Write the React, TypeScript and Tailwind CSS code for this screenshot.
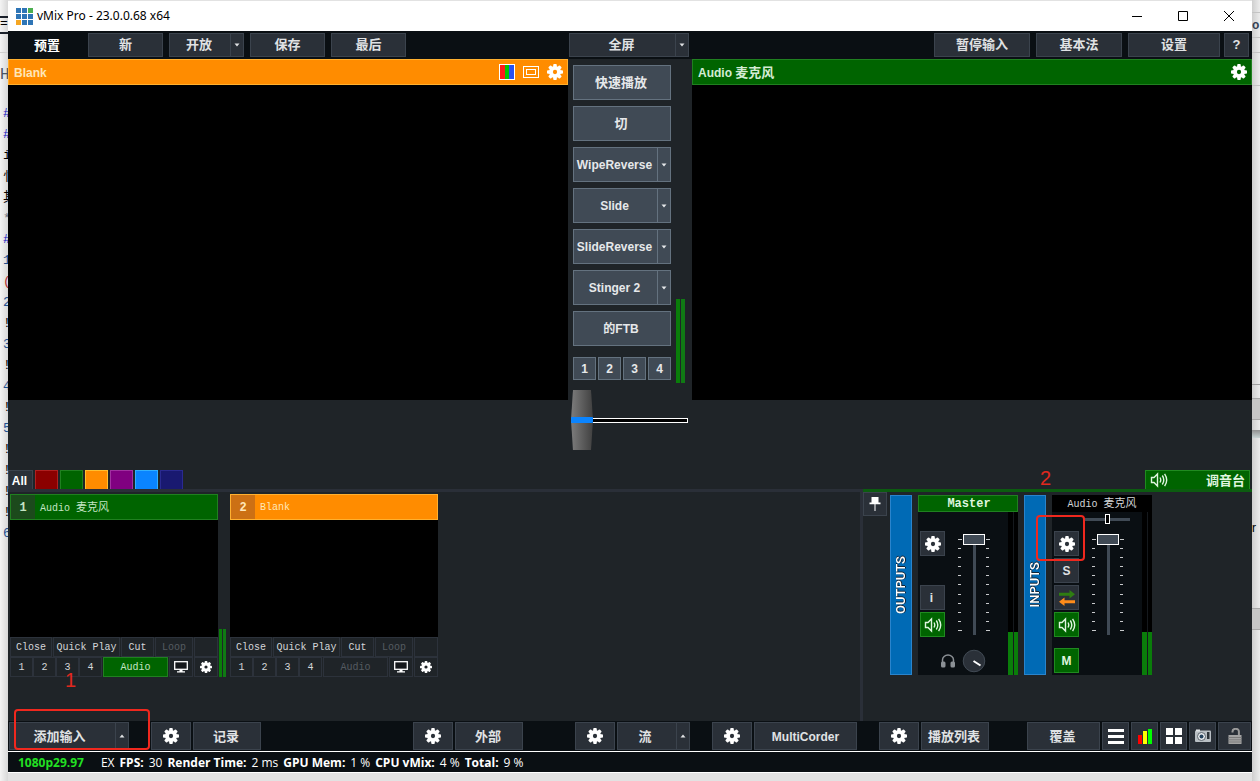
import { type ReactNode } from 'react';
import clsx from 'clsx';

const tabColors = [
    'bg-[#8b0000] border-[#b02020]',
    'bg-[#006400] border-[#208020]',
    'bg-[#ff8c00] border-[#ffc030]',
    'bg-[#800080] border-[#a030a0]',
    'bg-[#0a84ff] border-[#30b0ff]',
    'bg-[#191970] border-[#2a2a90]',
];

const transitions = ['WipeReverse', 'Slide', 'SlideReverse', 'Stinger 2'];

const editorLines = [
    ['#', 'text-[#1010c0]'],
    ['#', 'text-[#1010c0]'],
    ['i', 'text-black'],
    ['忄', 'text-black'],
    ['其', 'text-black'],
    ['*', 'text-gray-500'],
    ['#', 'text-[#1010c0]'],
    ['1', 'text-[#1d4f8f]'],
    ['(', 'text-[#b03030]'],
    ['2', 'text-[#1d4f8f]'],
    ['!', 'text-black'],
    ['3', 'text-[#1d4f8f]'],
    ['!', 'text-black'],
    ['4', 'text-[#1d4f8f]'],
    ['!', 'text-black'],
    ['5', 'text-[#1d4f8f]'],
    ['!', 'text-black'],
    ['!', 'text-black'],
    ['!', 'text-black'],
    ['!', 'text-black'],
    ['6', 'text-[#1d4f8f]'],
];

/* ── Icons ─────────────────────────────────────────────────────────── */

function Gear({ className = 'size-4' }: { className?: string }) {
    return (
        <svg viewBox="0 0 24 24" className={className} fill="currentColor" aria-hidden="true">
            <g mask="url(#gear-hole)">
                {[0, 45, 90, 135].map((deg) => (
                    <rect key={deg} x="9.3" y="0" width="5.4" height="24" rx="1.4" transform={`rotate(${deg} 12 12)`} />
                ))}
                <circle cx="12" cy="12" r="9" />
            </g>
        </svg>
    );
}

function Speaker() {
    return (
        <svg viewBox="0 0 18 16" className="h-4 w-4.5" fill="none" stroke="currentColor" strokeWidth="1.4" aria-hidden="true">
            <path d="M1.5 5.5h2.5l3.5-3.5v12l-3.5-3.5h-2.5z" />
            <path d="M10 5.5q1.5 2.5 0 5M12.3 3.5q3 4.5 0 9M14.6 1.8q4.2 6.2 0 12.4" />
        </svg>
    );
}

function Monitor() {
    return (
        <svg viewBox="0 0 14 12" className="h-3 w-3.5" aria-hidden="true">
            <rect x="0.7" y="0.7" width="12.6" height="7.6" fill="#15181b" stroke="#fff" strokeWidth="1.3" />
            <path d="M5.5 8.5h3v1.7h2.500v1.300h-8v-1.300h2.500z" fill="#fff" />
        </svg>
    );
}

function Pin() {
    return (
        <svg viewBox="0 0 12 14" className="h-3.5 w-3" fill="#fff" aria-hidden="true">
            <path d="M2.5 0h7v5.5h2v1.700h-5v6.800h-1v-6.800h-5v-1.700h2z" />
        </svg>
    );
}

function Swap() {
    return (
        <svg viewBox="0 0 16 16" className="size-4" aria-hidden="true">
            <path d="M0 2.800h10.500v-2.800l5.500 4.300-5.500 4.200v-2.800h-10.500z" fill="#2f7d12" />
            <path d="M16 10.300h-10.500v-2.800l-5.500 4.300 5.500 4.200v-2.800h10.500z" fill="#ff8c1a" />
        </svg>
    );
}

function Headphones() {
    return (
        <svg viewBox="0 0 16 14" className="h-3.5 w-4" fill="#8b9095" aria-hidden="true">
            <path d="M2.500 9v-3a5.500 5 0 0 1 11 0v3" fill="none" stroke="#8b9095" strokeWidth="1.500" />
            <rect x="1" y="7.500" width="4.500" height="6" rx="1.500" />
            <rect x="10.500" y="7.500" width="4.500" height="6" rx="1.500" />
        </svg>
    );
}

function Knob() {
    return (
        <svg viewBox="0 0 24 24" className="size-6" aria-hidden="true">
            <circle cx="12" cy="12" r="10.800" fill="#2a3038" stroke="#414a54" />
            <path d="m11.500 12 7 4.500" stroke="#fff" strokeWidth="2" />
        </svg>
    );
}

function Camera() {
    return (
        <svg viewBox="0 0 16 14" className="h-3.5 w-4" aria-hidden="true">
            <rect x="0" y="1.500" width="16" height="11.500" rx="1" fill="#b9bfc4" />
            <rect x="1" y="0.500" width="4" height="2" fill="#dfe3e6" />
            <circle cx="6.500" cy="7.500" r="4" fill="#e8ebee" stroke="#5c666e" />
            <circle cx="6.500" cy="7.500" r="2" fill="#24415c" />
            <rect x="12" y="3" width="2.500" height="7" fill="#2c3339" />
        </svg>
    );
}

function Unlock() {
    return (
        <svg viewBox="0 0 14 16" className="h-4 w-3.5" aria-hidden="true">
            <path d="M4.500 4.500v-1a3.200 2.700 0 0 1 6.400 0v4" fill="none" stroke="#9a9a9a" strokeWidth="2" />
            <rect x="0.500" y="7" width="13" height="9" fill="#a3a3a3" />
            <path d="M0.500 9.500h13M0.500 11.800h13M0.500 14h13" stroke="#7c7c7c" />
        </svg>
    );
}

function Caret({ up = false }: { up?: boolean }) {
    return (
        <svg viewBox="0 0 6 4" className={clsx('h-1 w-1.5', up && 'rotate-180')} fill="currentColor" aria-hidden="true">
            <path d="M0.500 0.500h5l-2.500 3z" />
        </svg>
    );
}

/* ── Controls ──────────────────────────────────────────────────────── */

const dark = 'border border-[#3b434d] bg-[#2a3038] text-[#e0e2e4]';
const light = 'border border-[#64727f] bg-[#404a55] text-[#e6e8ea]';
const thin = 'border border-[#2c323b] pt-0.5 text-[#d4d6d8]';
const thinOff = 'border border-[#2c323b] pt-0.5 text-[#555b61]';
const thinLive = 'border border-[#208020] bg-[#006400] pt-0.5 text-[#c4e4c4]';
const thinIcon = 'border border-[#2c323b] text-white';
const green = 'border border-[#208a20] bg-[#006400] text-[#dff5df]';

function Btn({ className, tone = dark, label, children }: { className?: string; tone?: string; label?: string; children?: ReactNode }) {
    return (
        <button type="button" aria-label={label} className={clsx('flex shrink-0 items-center justify-center whitespace-nowrap', tone, className)}>
            {children}
        </button>
    );
}

function SplitBtn({ className, tone = dark, up, children }: { className?: string; tone?: string; up?: boolean; children: ReactNode }) {
    return (
        <div className={clsx('flex shrink-0', className)}>
            <Btn tone={tone} className="min-w-0 flex-1 border-r-0 pr-0.5">{children}</Btn>
            <Btn tone={tone} className="w-3.5" label="More"><Caret up={up} /></Btn>
        </div>
    );
}

function Meter({ className }: { className?: string }) {
    return (
        <div className={clsx('flex gap-px', className)}>
            <div className="flex-1 bg-[#0a7d0a]" />
            <div className="flex-1 bg-[#107a14]" />
        </div>
    );
}

/* ── Input thumbnail ───────────────────────────────────────────────── */

function InputCard({ number, name, live }: { number: number; name: ReactNode; live?: boolean }) {
    return (
        <div className="flex items-end gap-px">
            <div className="w-[208px] font-['Liberation_Mono','Noto_Sans_CJK_SC',monospace] text-[10px]">
                <div
                    className={clsx(
                        'flex h-[26px] items-stretch border',
                        live ? 'border-[#208020] bg-[#006400] text-[#c4e4c4]' : 'border-[#ffb030] bg-[#ff8c00] text-[#ffe6b8]',
                    )}
                >
                    <div className={clsx('flex w-6 items-center justify-center pt-0.5 text-xs font-bold', live ? 'bg-[#1c4a1c]' : 'bg-[#cc7014]')}>{number}</div>
                    <div className="flex items-center pt-0.5 pl-[5px]">{name}</div>
                </div>
                <div className="h-[117px] bg-black" />
                <div className="flex h-5 gap-px">
                    <Btn tone={thin} className="w-[42px]">Close</Btn>
                    <Btn tone={thin} className="w-[67px]">Quick Play</Btn>
                    <Btn tone={thin} className="w-[33px]">Cut</Btn>
                    <Btn tone={thinOff} className="w-[38px]">Loop</Btn>
                    <Btn tone={thin} className="w-6" label="Position" />
                </div>
                <div className="flex h-5 gap-px">
                    <div className="flex">
                        {[1, 2, 3, 4].map((n) => (
                            <Btn key={n} tone={thin} className="w-[23px]">{n}</Btn>
                        ))}
                    </div>
                    <Btn tone={live ? thinLive : thinOff} className="w-[65px]">Audio</Btn>
                    <Btn tone={thinIcon} className="w-6" label="Output"><Monitor /></Btn>
                    <Btn tone={thinIcon} className="w-6" label="Settings"><Gear className="size-3" /></Btn>
                </div>
            </div>
            {live ? <Meter className="h-12 w-[7px]" /> : null}
        </div>
    );
}

/* ── Mixer ─────────────────────────────────────────────────────────── */

function BusBar({ children }: { children: ReactNode }) {
    return (
        <div className="flex w-[22px] items-center justify-center border border-[#2a84cc] bg-[#006ab5]">
            <span className="rotate-180 font-['Roboto',sans-serif] text-[13px] font-medium text-white [text-shadow:1px_0_#123,0_1px_#123] [writing-mode:vertical-rl]">{children}</span>
        </div>
    );
}

function Fader({ label }: { label: string }) {
    const ticks = (
        <div className="flex h-[92px] flex-col justify-between">
            {Array.from({ length: 11 }, (_, i) => (
                <div key={i} className={clsx('h-px bg-[#c8cacc]', i % 10 === 0 ? 'w-1' : 'w-[3px]')} />
            ))}
        </div>
    );
    return (
        <div className="flex gap-px pt-[22px]">
            <div className="pt-[5px]">{ticks}</div>
            <div className="grid h-[101px] w-[22px] justify-items-center">
                <div className="mt-2 w-[3px] bg-[#404a55] [grid-area:1/1]" />
                <input
                    type="range"
                    aria-label={label}
                    defaultValue={100}
                    className="z-10 h-[101px] w-[22px] appearance-none bg-transparent [direction:rtl] [grid-area:1/1] [writing-mode:vertical-lr] [&::-webkit-slider-thumb]:h-[11px] [&::-webkit-slider-thumb]:w-[22px] [&::-webkit-slider-thumb]:appearance-none [&::-webkit-slider-thumb]:border [&::-webkit-slider-thumb]:border-white [&::-webkit-slider-thumb]:bg-[#404a55]"
                />
            </div>
            <div className="pt-[5px]">{ticks}</div>
        </div>
    );
}

function ChannelMeter() {
    return (
        <div className="flex w-[10px] gap-px bg-[#15191d]">
            {[0, 1].map((n) => (
                <div key={n} className="flex flex-1 flex-col justify-end bg-black">
                    <div className="h-[43px] bg-[#0a7d0a]" />
                </div>
            ))}
        </div>
    );
}

/* ── Page ──────────────────────────────────────────────────────────── */

export default function App() {
    return (
        <div className="flex min-h-screen bg-[#e2e2e2] font-['Liberation_Sans','Noto_Sans_CJK_SC',sans-serif] text-xs leading-4">
            {/* Shared mask that cuts the gear centres */}
            <svg className="absolute size-0" aria-hidden="true">
                <mask id="gear-hole" maskUnits="userSpaceOnUse" x="-6" y="-6" width="36" height="36">
                    <rect x="-6" y="-6" width="36" height="36" fill="#fff" />
                    <circle cx="12" cy="12" r="3.2" fill="#000" />
                </mask>
            </svg>

            {/* Editor behind the window, left edge */}
            <div className="w-2 shrink-0 overflow-hidden bg-linear-to-r from-[#f4f4f4] to-[#d8d8d8] pt-4 font-['Liberation_Mono','Noto_Sans_CJK_SC',monospace] text-[13px]">
                <div className="h-[18px] border-y-2 border-[#1a202a] text-center leading-3">=</div>
                <div className="mt-[18px] h-[51px] border-t border-[#d0d0d0] pt-2.5 text-base text-gray-600">H</div>
                {editorLines.map(([char, color], i) => (
                    <div key={i} className={clsx('h-[21px] pl-[3px] leading-[21px]', color)}>{char}</div>
                ))}
            </div>

            <div className="flex min-w-0 flex-1 flex-col pt-px pb-2">
                {/* Title bar */}
                <header className="flex h-[30px] items-center bg-white pl-2 font-['Noto_Sans',sans-serif] text-black">
                    <div className="grid grid-cols-3 gap-px">
                        {[0, 1, 2, 3, 4, 5, 6, 7, 8].map((n) => (
                            <div key={n} className={clsx('size-[5px]', n === 2 ? 'bg-[#4caf50]' : n === 6 ? 'bg-[#f5a623]' : 'bg-[#2e75b6]')} />
                        ))}
                    </div>
                    <h1 className="ml-1 flex-1 text-xs">vMix Pro - 23.0.0.68 x64</h1>
                    <div className="flex text-black">
                        <button type="button" aria-label="Minimize" className="flex h-[30px] w-[46px] items-center justify-center">
                            <svg viewBox="0 0 10 10" className="size-2.5" stroke="currentColor"><path d="M0 5.5h10" /></svg>
                        </button>
                        <button type="button" aria-label="Maximize" className="flex h-[30px] w-[46px] items-center justify-center">
                            <svg viewBox="0 0 10 10" className="size-2.5" fill="none" stroke="currentColor"><path d="M0.5 0.5h9v9h-9z" /></svg>
                        </button>
                        <button type="button" aria-label="Close" className="flex h-[30px] w-[46px] items-center justify-center">
                            <svg viewBox="0 0 10 10" className="size-2.5" stroke="currentColor"><path d="m0 0 10 10M10 0 0 10" /></svg>
                        </button>
                    </div>
                </header>

                {/* Toolbar */}
                <nav className="grid h-7 grid-cols-[1fr_124px_1fr] items-stretch bg-[#0a0f13] py-0.5 text-[13px] font-bold">
                    <div className="flex gap-1.5">
                        <div className="flex w-[74px] items-center justify-center pt-0.5 pl-1 text-white">预置</div>
                        <Btn className="w-[75px]">新</Btn>
                        <SplitBtn className="w-[75px]">开放</SplitBtn>
                        <Btn className="w-[75px]">保存</Btn>
                        <Btn className="w-[75px]">最后</Btn>
                    </div>
                    <SplitBtn className="ml-px w-[120px]">全屏</SplitBtn>
                    <div className="flex justify-end gap-1.5 pr-[3px]">
                        <Btn className="w-24">暂停输入</Btn>
                        <Btn className="w-[86px]">基本法</Btn>
                        <div className="flex gap-1">
                            <Btn className="w-[92px]">设置</Btn>
                            <Btn className="w-[25px]">?</Btn>
                        </div>
                    </div>
                </nav>

                {/* Preview, transitions, output */}
                <main className="grid grid-cols-[1fr_124px_1fr] bg-[#1f2428] font-bold">
                    <section>
                        <div className="flex h-[26px] items-center justify-between border border-[#ffb030] bg-[#ff8c00] pr-1 pl-[5px] text-[#ffe6b8]">
                            <span className="pt-0.5">Blank</span>
                            <div className="flex items-center gap-2 text-white">
                                <div className="flex size-4 border border-white">
                                    <div className="flex-1 bg-[#ff1a1a]" />
                                    <div className="flex-1 bg-[#00c800]" />
                                    <div className="flex-1 bg-[#2a50f0]" />
                                </div>
                                <div className="flex h-3 w-4 items-center justify-center border border-white">
                                    <div className="h-1.5 w-2.5 border border-white" />
                                </div>
                                <button type="button" aria-label="Preview settings"><Gear /></button>
                            </div>
                        </div>
                        <div className="aspect-video bg-black" />
                    </section>

                    <section className="pt-1.5">
                        <div className="flex items-end gap-[5px] pl-[5px]">
                            <div className="flex w-[98px] flex-col gap-1.5">
                                <Btn tone={light} className="h-[35px] pr-0.5 text-[13px]">快速播放</Btn>
                                <Btn tone={light} className="h-[35px] pr-0.5 text-[13px]">切</Btn>
                                {transitions.map((name) => (
                                    <SplitBtn key={name} tone={light} className="h-[35px]">{name}</SplitBtn>
                                ))}
                                <Btn tone={light} className="h-[35px] pr-0.5">的FTB</Btn>
                                <div className="mt-[5px] mb-[3px] flex justify-between">
                                    {[1, 2, 3, 4].map((n) => (
                                        <Btn key={n} tone={light} className="size-[23px]">{n}</Btn>
                                    ))}
                                </div>
                            </div>
                            <Meter className="h-[84px] w-[9px]" />
                        </div>
                        <div className="mt-[7px] mb-5 grid items-center pr-1 pl-[3px]">
                            <div className="h-[5px] border border-white bg-black [grid-area:1/1]" />
                            <input
                                type="range"
                                aria-label="Transition bar"
                                defaultValue={0}
                                className="z-10 h-[60px] w-full appearance-none bg-transparent [grid-area:1/1] [&::-webkit-slider-thumb]:h-[60px] [&::-webkit-slider-thumb]:w-[22px] [&::-webkit-slider-thumb]:appearance-none [&::-webkit-slider-thumb]:bg-[linear-gradient(transparent_45%,#0a84ff_45%_55%,transparent_55%),linear-gradient(to_right,#7c7c7c,#404040)] [&::-webkit-slider-thumb]:[clip-path:polygon(9%_0,91%_0,100%_50%,91%_100%,9%_100%,0_50%)]"
                            />
                        </div>
                    </section>

                    <section>
                        <div className="flex h-[26px] items-center justify-between border border-[#208020] bg-[#006400] pr-1 pl-[5px] text-[#d4ecd4]">
                            <span className="pt-0.5">Audio <span className="text-[13px]">麦克风</span></span>
                            <button type="button" aria-label="Output settings" className="text-white"><Gear /></button>
                        </div>
                        <div className="aspect-video bg-black" />
                    </section>
                </main>

                {/* Category tabs */}
                <div className="flex h-[22px] bg-[#1f2428] font-bold">
                    <div className="flex flex-1 gap-0.5 border-b-3 border-[#2a2f38]">
                        <Btn tone="border border-b-0 border-[#3b434d] bg-[#2a3038] text-white" className="w-[25px] pt-0.5 pr-0.5">All</Btn>
                        {tabColors.map((color) => (
                            <Btn key={color} tone={color} className="w-[23px] border border-b-0" label="Category" />
                        ))}
                    </div>
                    <div className="relative flex w-[389px] justify-end border-b-3 border-[#0c5c10] pr-0.5">
                        <span className="absolute -top-0.5 left-[177px] text-xl leading-5 font-normal text-[#e0281e]">2</span>
                        <button type="button" className="flex w-[105px] items-center justify-between border border-b-0 border-[#208a20] bg-[#006400] px-1 text-[13px] text-[#dff5df]">
                            <Speaker />
                            <span className="pt-0.5">调音台</span>
                        </button>
                    </div>
                </div>

                {/* Inputs and mixer */}
                <div className="flex flex-1 bg-[#1f2428]">
                    <section className="relative flex flex-1 items-start gap-1 border-r-3 border-[#2a2f38] pt-0.5 pl-0.5">
                        <InputCard number={1} live name={<span>Audio <span className="text-[11px]">麦克风</span></span>} />
                        <InputCard number={2} name="Blank" />
                        <span className="absolute top-[178px] left-[57px] text-xl leading-5 text-[#e0281e]">1</span>
                    </section>

                    <section className="flex w-[389px] items-start">
                        <Btn className="size-6" label="Pin"><Pin /></Btn>
                        <div className="mt-[3px] ml-[3px] flex h-[180px] gap-1.5">
                            <BusBar>OUTPUTS</BusBar>
                            <div className="flex w-[100px] flex-col bg-[#0a0f13]">
                                <div className="h-[17px] border border-[#208020] bg-[#006400] pl-0.5 text-center font-['Liberation_Mono',monospace] leading-[17px] font-bold text-[#dff5df]">Master</div>
                                <div className="flex flex-1 justify-between pl-0.5">
                                    <div className="flex flex-col">
                                        <div className="flex gap-[13px]">
                                            <div className="flex flex-col pt-[19px]">
                                                <Btn className="size-[25px] text-white" label="Master settings"><Gear /></Btn>
                                                <Btn className="mt-[29px] size-[25px] pr-0.5 font-bold">i</Btn>
                                                <Btn tone={green} className="mt-0.5 size-[25px]" label="Master audio"><Speaker /></Btn>
                                            </div>
                                            <Fader label="Master volume" />
                                        </div>
                                        <div className="mt-3 flex items-center gap-1.5 pl-5">
                                            <Headphones />
                                            <Knob />
                                        </div>
                                    </div>
                                    <ChannelMeter />
                                </div>
                            </div>
                            <BusBar>INPUTS</BusBar>
                            <div className="relative flex w-[100px] flex-col bg-[#0a0f13]">
                                <div className="h-[17px] bg-black text-center font-['Liberation_Mono','Noto_Sans_CJK_SC',monospace] text-[10px] leading-[18px] text-[#d4d6d8]">
                                    Audio <span className="text-[11px]">麦克风</span>
                                </div>
                                <div className="flex flex-1 justify-between pl-0.5">
                                    <div className="flex gap-[13px]">
                                        <div className="flex flex-col gap-0.5 pt-[19px] font-bold">
                                            <Btn className="size-[25px] text-white" label="Input settings"><Gear /></Btn>
                                            <Btn className="size-[25px]">S</Btn>
                                            <Btn className="size-[25px]" label="Routing"><Swap /></Btn>
                                            <Btn tone={green} className="size-[25px]" label="Input audio"><Speaker /></Btn>
                                            <Btn tone={green} className="mt-[9px] size-[25px]">M</Btn>
                                        </div>
                                        <Fader label="Input volume" />
                                    </div>
                                    <ChannelMeter />
                                </div>
                                <div className="absolute top-[19px] left-8 grid w-[46px] items-center">
                                    <div className="h-[3px] bg-[#404a55] [grid-area:1/1]" />
                                    <input
                                        type="range"
                                        aria-label="Pan"
                                        defaultValue={50}
                                        className="z-10 h-2.5 w-full appearance-none bg-transparent [grid-area:1/1] [&::-webkit-slider-thumb]:h-2.5 [&::-webkit-slider-thumb]:w-[5px] [&::-webkit-slider-thumb]:appearance-none [&::-webkit-slider-thumb]:border [&::-webkit-slider-thumb]:border-white [&::-webkit-slider-thumb]:bg-black"
                                    />
                                </div>
                                <div className="absolute top-5 -left-4 z-20 h-[46px] w-[49px] rounded-sm border-2 border-[#f0281e]" />
                            </div>
                        </div>
                    </section>
                </div>

                {/* Bottom bar */}
                <footer className="relative flex h-[30px] items-stretch justify-between bg-[#0a0f13] p-px text-[13px] font-bold">
                    <SplitBtn up className="w-[120px]"><span className="pt-0.5 pr-1">添加输入</span></SplitBtn>
                    <div className="ml-[22px] flex gap-0.5">
                        <Btn className="w-10 text-white" label="Record settings"><Gear /></Btn>
                        <Btn className="w-[68px] pt-0.5 pr-0.5">记录</Btn>
                    </div>
                    <div className="ml-auto flex gap-0.5">
                        <Btn className="w-10 text-white" label="External settings"><Gear /></Btn>
                        <Btn className="w-[68px] pt-0.5 pr-0.5">外部</Btn>
                    </div>
                    <div className="ml-[52px] flex gap-0.5">
                        <Btn className="w-10 text-white" label="Stream settings"><Gear /></Btn>
                        <SplitBtn up className="w-[73px]"><span className="pt-0.5 pr-0.5">流</span></SplitBtn>
                    </div>
                    <div className="ml-[22px] flex gap-0.5">
                        <Btn className="w-10 text-white" label="MultiCorder settings"><Gear /></Btn>
                        <Btn className="w-[103px] pt-0.5 text-xs">MultiCorder</Btn>
                    </div>
                    <div className="ml-[22px] flex gap-0.5">
                        <Btn className="w-10 text-white" label="Playlist settings"><Gear /></Btn>
                        <Btn className="w-[68px] pt-0.5 pr-0.5">播放列表</Btn>
                    </div>
                    <div className="ml-[38px] flex gap-0.5">
                        <Btn className="w-[73px] pt-0.5 pr-0.5">覆盖</Btn>
                        <Btn className="w-[27px]" label="List">
                            <svg viewBox="0 0 16 16" className="size-4" fill="#fff"><path d="M0 1h16v3h-16zM0 7h16v3h-16zM0 13h16v3h-16z" /></svg>
                        </Btn>
                        <Btn className="w-[27px]" label="Levels">
                            <svg viewBox="0 0 14 15" className="h-[15px] w-3.5">
                                <path d="M0 6h4v9h-4z" fill="#f00" />
                                <path d="M5 2h4v13h-4z" fill="#ff0" />
                                <path d="M10 0h4v15h-4z" fill="#0f0" />
                            </svg>
                        </Btn>
                        <Btn className="w-[27px]" label="Grid">
                            <svg viewBox="0 0 16 16" className="size-4" fill="#fff"><path d="M0 0h7v7h-7zM9 0h7v7h-7zM0 9h7v7h-7zM9 9h7v7h-7z" /></svg>
                        </Btn>
                        <Btn className="w-[27px]" label="Snapshot"><Camera /></Btn>
                        <Btn className="w-[33px]" label="Lock"><Unlock /></Btn>
                    </div>
                    <div className="absolute -top-3 left-1.5 h-[41px] w-[136px] rounded-sm border-2 border-[#f0281e]" />
                </footer>

                {/* Status bar */}
                <div className="flex h-[22px] items-center gap-[5px] border-y border-white bg-[#0a0f13] pt-0.5 pl-2.5 font-['Open_Sans',sans-serif] text-white">
                    <b className="mr-3 text-[#22e022]">1080p29.97</b>
                    <span>EX</span>
                    <b>FPS:</b>
                    <span>30</span>
                    <b>Render Time:</b>
                    <span>2 ms</span>
                    <b>GPU Mem:</b>
                    <span>1 %</span>
                    <b>CPU vMix:</b>
                    <span>4 %</span>
                    <b>Total:</b>
                    <span>9 %</span>
                </div>
            </div>

            {/* Desktop, right edge */}
            <div className="w-2 shrink-0 overflow-hidden bg-linear-to-r from-[#cfcfcf] to-[#ececec] pt-3">
                <div className="h-[26px] border-y border-[#c4c4c4] font-bold text-gray-700 leading-6">o</div>
                <div className="mt-[14px] h-[34px] border-y border-[#c4c4c4]" />
                <div className="mt-[298px] h-[14px] border-t border-[#a0a0a0]" />
                <div className="h-[22px] border-y border-[#a8a8a8] bg-[#c6c6c6]" />
                <div className="mt-2.5 h-2 bg-linear-to-b from-[#909090] to-[#c8d4d4]" />
                <div className="mt-[82px] h-4 leading-4">r</div>
                <div className="mt-[72px] h-[22px] border-y border-[#a8a8a8] bg-[#c6c6c6]" />
            </div>
        </div>
    );
}
